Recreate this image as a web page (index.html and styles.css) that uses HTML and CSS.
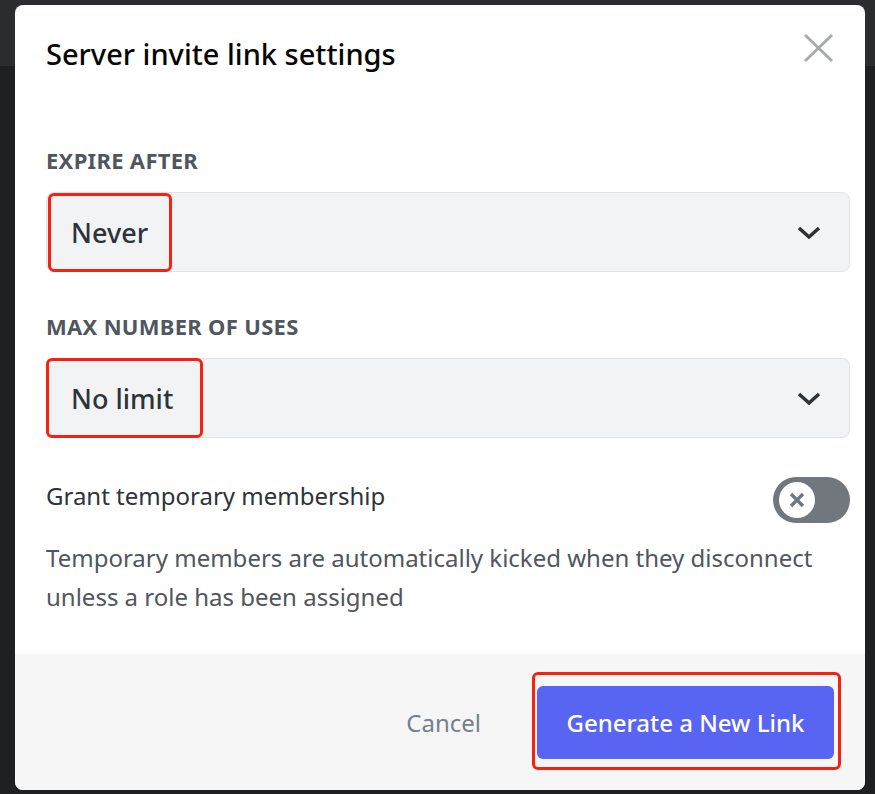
FILE: index.html
```html
<!DOCTYPE html>
<html lang="en">
<head>
    <meta charset="UTF-8">
    <meta name="viewport" content="width=device-width, initial-scale=1.0">
    <title>Server invite link settings</title>
    <link rel="stylesheet" href="styles.css">
</head>
<body>
    <div class="modal">
        <div class="modal-body">
            <header class="modal-header">
                <h1>Server invite link settings</h1>
                <button class="close" aria-label="Close">
                    <svg width="31" height="30" viewBox="0 0 31 30">
                        <path d="M2 2 L29 28 M29 2 L2 28" stroke="#a7aaaf" stroke-width="3" fill="none"/>
                    </svg>
                </button>
            </header>

            <div class="field">
                <h2 class="label">Expire after</h2>
                <div class="select">
                    <span class="select-value">Never</span>
                    <svg class="chevron" width="24" height="13" viewBox="0 0 24 13">
                        <polyline points="2,2 12,11 22,2" stroke="#2e3338" stroke-width="3.5" fill="none"/>
                    </svg>
                    <span class="mark mark-never"></span>
                </div>
            </div>

            <div class="field">
                <h2 class="label">Max number of uses</h2>
                <div class="select">
                    <span class="select-value">No limit</span>
                    <svg class="chevron" width="24" height="13" viewBox="0 0 24 13">
                        <polyline points="2,2 12,11 22,2" stroke="#2e3338" stroke-width="3.5" fill="none"/>
                    </svg>
                    <span class="mark mark-limit"></span>
                </div>
            </div>

            <div class="toggle-row">
                <span class="toggle-label">Grant temporary membership</span>
                <div class="toggle">
                    <span class="knob">
                        <svg width="18" height="18" viewBox="0 0 18 18">
                            <path d="M3 3 L15 15 M15 3 L3 15" stroke="#72767d" stroke-width="3.4" fill="none"/>
                        </svg>
                    </span>
                </div>
            </div>

            <p class="note">Temporary members are automatically kicked when they disconnect unless a role has been assigned</p>
        </div>

        <footer class="modal-footer">
            <button class="cancel">Cancel</button>
            <div class="submit-wrap">
                <button class="submit">Generate a New Link</button>
                <span class="mark mark-submit"></span>
            </div>
        </footer>
    </div>
</body>
</html>
```

FILE: styles.css
```css
body {
    margin: 0;
    padding: 5px 10px 4px 15px;
    background: linear-gradient(#2b2c2f 0 66px, #1e1f22 66px);
    font-family: "Noto Sans", sans-serif;
}

.modal {
    width: 850px;
    height: 785px;
    background: #fff;
    border-radius: 8px;
    display: flex;
    flex-direction: column;
    overflow: hidden;
}

.modal-body {
    flex: 1;
    padding: 29px 15px 0 31px;
}

.modal-header {
    display: flex;
    justify-content: space-between;
    align-items: flex-start;
}

.modal-header h1 {
    margin: 0;
    font-size: 29px;
    line-height: 40px;
    font-weight: 500;
    color: #060607;
}

.close {
    background: none;
    border: none;
    padding: 0;
    margin: -1px 16px 0 0;
    display: flex;
}

.field {
    margin-top: 40px;
}

.field:first-of-type {
    margin-top: 72px;
}

.label {
    margin: 0 0 18px;
    font-size: 22px;
    line-height: 28px;
    font-weight: 700;
    letter-spacing: 0.3px;
    text-transform: uppercase;
    color: #4f5660;
}

.select {
    position: relative;
    height: 80px;
    box-sizing: border-box;
    background: #f2f3f5;
    border: 1px solid #e1e3e7;
    border-radius: 8px;
    display: flex;
    align-items: center;
    justify-content: space-between;
    padding: 0 28px 0 24px;
}

.select-value {
    font-size: 27px;
    font-weight: 500;
    color: #2e3338;
}

/* red highlight boxes drawn over the screenshot */
.mark {
    position: absolute;
    border: 3px solid #f6220f;
    border-radius: 6px;
    box-sizing: border-box;
}

.mark-never {
    left: 1px;
    top: 0;
    width: 124px;
    height: 79px;
}

.mark-limit {
    left: -1px;
    top: -1px;
    width: 157px;
    height: 80px;
}

.toggle-row {
    margin-top: 39px;
    height: 46px;
    display: flex;
    justify-content: space-between;
    align-items: center;
}

.toggle-label {
    font-size: 24px;
    font-weight: 400;
    color: #2e3338;
    padding-bottom: 9px;
}

.toggle {
    width: 77px;
    height: 46px;
    border-radius: 23px;
    background: #72767d;
    display: flex;
    align-items: center;
    padding-left: 6px;
    box-sizing: border-box;
}

.knob {
    width: 36px;
    height: 36px;
    border-radius: 50%;
    background: #fff;
    display: flex;
    align-items: center;
    justify-content: center;
}

.note {
    margin: 16px 0 0;
    font-size: 24px;
    line-height: 38.5px;
    color: #4f5660;
}

.modal-footer {
    height: 136px;
    background: #f6f6f7;
    display: flex;
    justify-content: flex-end;
    align-items: center;
    padding-right: 31px;
}

.cancel {
    background: none;
    border: none;
    padding: 0;
    margin-right: 56px;
    font-family: inherit;
    font-size: 24px;
    color: #747f8d;
}

.submit-wrap {
    position: relative;
}

.submit {
    width: 297px;
    height: 73px;
    border: none;
    border-radius: 6px;
    background: #5865f2;
    color: #fff;
    font-family: inherit;
    font-size: 24px;
    font-weight: 500;
    display: block;
}

.mark-submit {
    top: -14px;
    left: -5px;
    right: -7px;
    bottom: -11px;
}
```
